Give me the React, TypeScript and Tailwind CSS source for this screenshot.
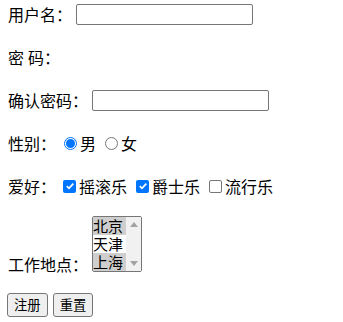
import React from 'react'

function Check({ checked }: { checked?: boolean }) {
  return checked ? (
    <span className="flex size-[13px] items-center justify-center rounded-[2px] bg-[#0075ff]">
      <svg viewBox="0 0 10 10" className="size-[10px]">
        <path d="M1.8 5.2 L4 7.3 L8.3 2.6" fill="none" stroke="white" strokeWidth="1.8" />
      </svg>
    </span>
  ) : (
    <span className="block size-[13px] rounded-[2px] border border-[#767676] bg-white" />
  )
}

function Radio({ checked }: { checked?: boolean }) {
  return checked ? (
    <span className="flex size-[13px] items-center justify-center rounded-full border border-[#0075ff] bg-white">
      <span className="block size-[9px] rounded-full bg-[#0075ff]" />
    </span>
  ) : (
    <span className="block size-[13px] rounded-full border border-[#767676] bg-white" />
  )
}

export default function App() {
  return (
    <div className="min-h-screen bg-white px-2 pt-[3px] font-['Noto_Sans_CJK_SC','Noto_Sans',sans-serif] text-[16px] leading-[22px] text-black">
      <div className="flex h-[22px] items-center">
        <span>用户名：</span>
        <div className="ml-1 h-[21px] w-[177px] rounded-[2px] border border-[#767676]" />
      </div>

      <div className="mt-[21px] flex h-[22px] items-center">
        <span>密</span>
        <span className="ml-1">码：</span>
      </div>

      <div className="mt-[21px] flex h-[22px] items-center">
        <span>确认密码：</span>
        <div className="ml-1 h-[21px] w-[177px] rounded-[2px] border border-[#767676]" />
      </div>

      <div className="mt-[21px] flex h-[22px] items-center">
        <span>性别：</span>
        <span className="ml-2">
          <Radio checked />
        </span>
        <span className="ml-[3px]">男</span>
        <span className="ml-[9px]">
          <Radio />
        </span>
        <span className="ml-[3px]">女</span>
      </div>

      <div className="mt-[21px] flex h-[22px] items-center">
        <span>爱好：</span>
        <span className="ml-[7px]">
          <Check checked />
        </span>
        <span className="ml-[3px]">摇滚乐</span>
        <span className="ml-[9px]">
          <Check checked />
        </span>
        <span className="ml-[3px]">爵士乐</span>
        <span className="ml-[9px]">
          <Check />
        </span>
        <span className="ml-[3px]">流行乐</span>
      </div>

      <div className="mt-[19px] flex items-end">
        <span className="mb-[-3px]">工作地点：</span>
        <div className="ml-1 flex h-[56px] w-[50px] overflow-hidden rounded-[2px] border border-[#767676] text-[15px] leading-[18px]">
          <div className="flex w-[33px] flex-col">
            <div className="h-[18px] bg-[#cecece]">北京</div>
            <div className="h-[18px]">天津</div>
            <div className="h-[18px] bg-[#cecece]">上海</div>
          </div>
          <div className="flex flex-1 flex-col items-center justify-between bg-[#f1f1f1] py-[5px]">
            <svg viewBox="0 0 8 5" className="h-[5px] w-[8px]">
              <path d="M0 5 L4 0 L8 5 Z" fill="#a3a3a3" />
            </svg>
            <svg viewBox="0 0 8 5" className="h-[5px] w-[8px]">
              <path d="M0 0 L4 5 L8 0 Z" fill="#a3a3a3" />
            </svg>
          </div>
        </div>
      </div>

      <div className="mt-[21px] flex items-center gap-[5px]">
        <button className="-ml-px h-[24px] rounded-[3px] border border-[#767676] bg-[#efefef] px-[6px] text-[13.33px] leading-[20px]">
          注册
        </button>
        <button className="h-[24px] rounded-[3px] border border-[#767676] bg-[#efefef] px-[6px] text-[13.33px] leading-[20px]">
          重置
        </button>
      </div>
    </div>
  )
}
